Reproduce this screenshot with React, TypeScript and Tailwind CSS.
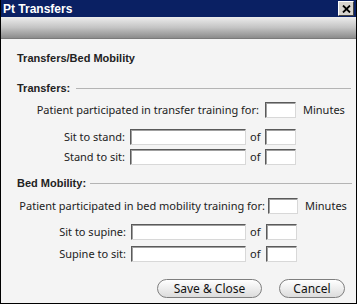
import React from "react";

const body = { fontFamily: '"Noto Sans", "DejaVu Sans", sans-serif' };
const bold = { fontFamily: '"Liberation Sans", "DejaVu Sans", sans-serif' };

function Box({ w, h = "h-[16px]" }: { w: string; h?: string }) {
  return (
    <div
      className={`${w} ${h} shrink-0 bg-white border border-t-[#5a5a5a] border-l-[#5a5a5a] border-r-[#d8d8d8] border-b-[#d8d8d8] shadow-[inset_1px_1px_0_#a0a0a0]`}
    />
  );
}

function Section({ title, lineClass }: { title: string; lineClass: string }) {
  return (
    <div className="flex items-center h-[14px] pl-[16px] whitespace-nowrap">
      <span className="text-[11px] font-bold text-[#222]" style={bold}>
        {title}
      </span>
      <div className={`h-px bg-[#b4b4b4] shrink-0 ${lineClass}`} />
    </div>
  );
}

export default function App() {
  return (
    <div className="w-[357px] h-[304px] bg-[#f4f4f4] border-l border-r border-b border-black flex flex-col text-[#222] overflow-hidden">
      <div className="h-[17px] bg-[#0a2063] flex items-center justify-between pl-[2px] pr-[2px] shrink-0">
        <span className="text-white font-bold text-[12px] leading-none" style={bold}>
          Pt Transfers
        </span>
        <div className="w-[16px] h-[15px] bg-[#d6d3ce] border border-t-white border-l-white border-r-[#404040] border-b-[#404040] flex items-center justify-center">
          <svg width="9" height="8" viewBox="0 0 9 8">
            <path d="M1 0.5 L8 7.5 M8 0.5 L1 7.5" stroke="#000" strokeWidth="1.8" />
          </svg>
        </div>
      </div>
      <div className="h-[22px] shrink-0 bg-gradient-to-b from-[#ededed] via-[#c4c4c4] to-[#8c8c8c] border-b border-[#7a7a7a]" />
      <div className="flex flex-col whitespace-nowrap" style={body}>
        <div className="pl-[16px] mt-[12px] h-[14px] flex items-center">
          <span className="text-[11px] font-bold" style={bold}>
            Transfers/Bed Mobility
          </span>
        </div>
        <div className="mt-[16px]">
          <Section title="Transfers:" lineClass="ml-[6px] w-[275px]" />
        </div>
        <div className="flex items-center mt-[7px] text-[11px]">
          <div className="w-[259px] shrink-0 text-right pr-[1px]">Patient participated in transfer training for:</div>
          <div className="ml-[5px]"><Box w="w-[31px]" /></div>
          <div className="ml-[7px]">Minutes</div>
        </div>
        <div className="flex items-center mt-[10px] text-[11px]">
          <div className="w-[124px] shrink-0 text-right">Sit to stand:</div>
          <div className="ml-[5px]"><Box w="w-[116px]" /></div>
          <div className="ml-[4px] w-[15px] shrink-0">of</div>
          <Box w="w-[31px]" />
        </div>
        <div className="flex items-center mt-[4px] text-[11px]">
          <div className="w-[124px] shrink-0 text-right">Stand to sit:</div>
          <div className="ml-[5px]"><Box w="w-[116px]" /></div>
          <div className="ml-[4px] w-[15px] shrink-0">of</div>
          <Box w="w-[31px]" />
        </div>
        <div className="mt-[11px]">
          <Section title="Bed Mobility:" lineClass="ml-[4px] w-[262px]" />
        </div>
        <div className="flex items-center mt-[7px] text-[11px]">
          <div className="w-[265px] shrink-0 text-right pr-[1px]">Patient participated in bed mobility training for:</div>
          <div className="ml-[2px]"><Box w="w-[30px]" /></div>
          <div className="ml-[7px]">Minutes</div>
        </div>
        <div className="flex items-center mt-[10px] text-[11px]">
          <div className="w-[125px] shrink-0 text-right">Sit to supine:</div>
          <div className="ml-[5px]"><Box w="w-[115px]" /></div>
          <div className="ml-[4px] w-[16px] shrink-0">of</div>
          <Box w="w-[31px]" />
        </div>
        <div className="flex items-center mt-[5px] text-[11px]">
          <div className="w-[125px] shrink-0 text-right">Supine to sit:</div>
          <div className="ml-[5px]"><Box w="w-[115px]" /></div>
          <div className="ml-[4px] w-[16px] shrink-0">of</div>
          <Box w="w-[31px]" />
        </div>
        <div className="flex items-center mt-[17px] pl-[156px] gap-[17px] text-[12px]">
          <button className="w-[105px] h-[19px] shrink-0 rounded-full border border-[#7e7e7e] bg-gradient-to-b from-white to-[#dcdcdc] leading-none text-[#111]">
            Save &amp; Close
          </button>
          <button className="w-[66px] h-[19px] shrink-0 rounded-full border border-[#7e7e7e] bg-gradient-to-b from-white to-[#dcdcdc] leading-none text-[#111]">
            Cancel
          </button>
        </div>
      </div>
    </div>
  );
}
